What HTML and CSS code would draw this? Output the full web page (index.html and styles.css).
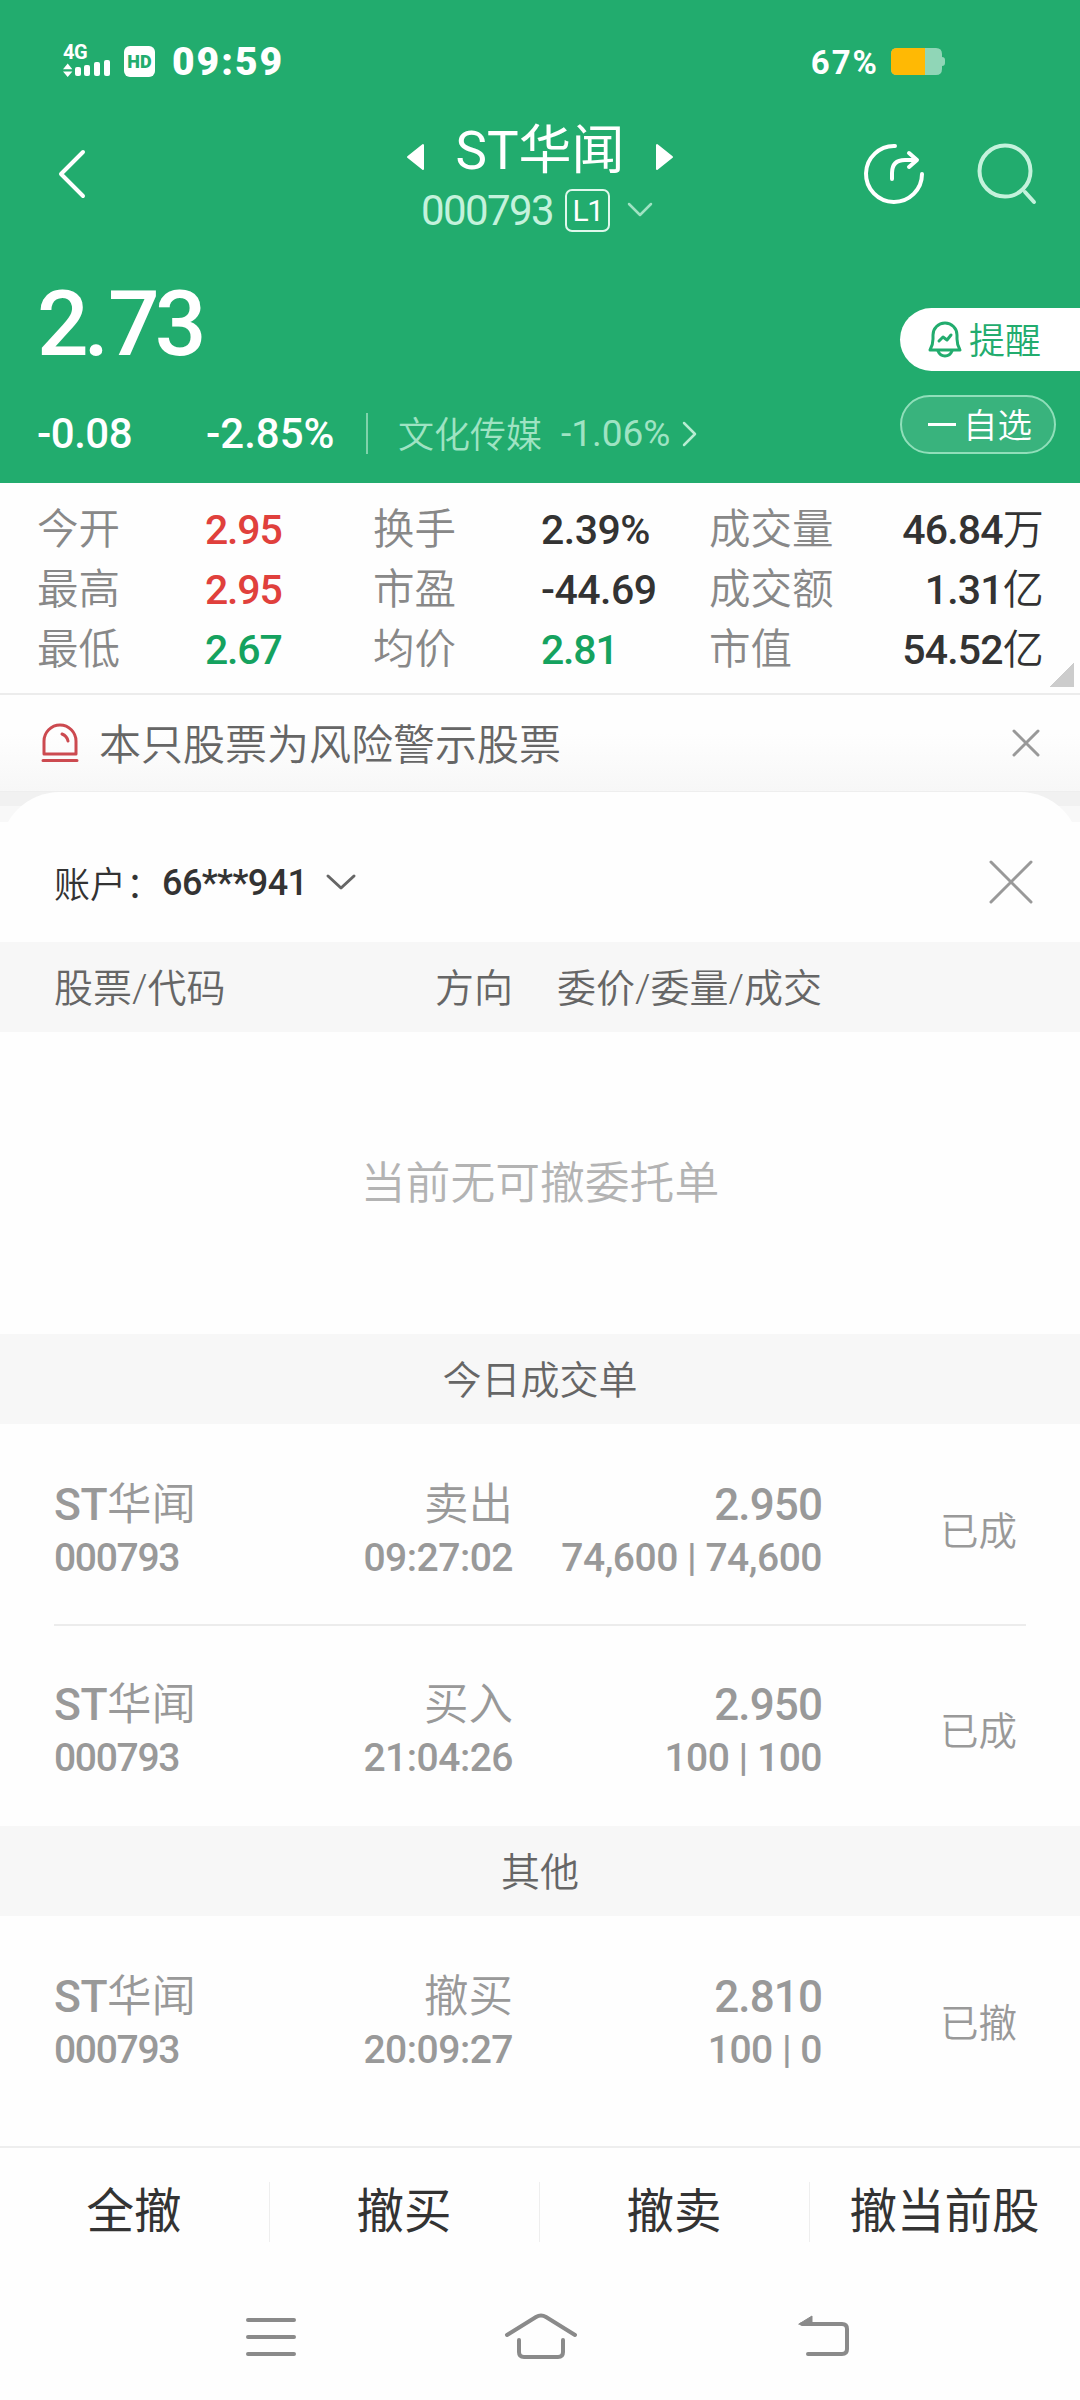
FILE: index.html
```html
<!DOCTYPE html>
<html lang="zh-CN">
  <head>
    <meta charset="utf-8">
    <title>ST华闻 000793</title>
    <link rel="stylesheet" href="styles.css">
  </head>
  <body>
    <header class="top">
      <div class="status">
        <div class="signal">
          <span class="net">4G</span>
          <svg width="48" height="16" viewBox="0 0 48 16" fill="#fff">
            <path d="M0 7.200L4.700 1.500l4.700 5.700zM0 9.500h9.400L4.700 15z" />
            <rect x="12" y="5" width="6" height="9" rx="2" />
            <rect x="21" y="3" width="6" height="11" rx="2" />
            <rect x="31" y="0" width="6" height="14" rx="2" />
            <rect x="41" y="-2" width="6" height="16" rx="2" />
          </svg>
        </div>
        <span class="hd">HD</span>
        <span class="time">09:59</span>
        <span class="percent">67%</span>
        <svg width="54" height="27" viewBox="0 0 54 27">
          <path d="M6 0h39q6 0 6 6v3q3 0 3 3v3q0 3-3 3v3q0 6-6 6H6q-6 0-6-6V6q0-6 6-6z" fill="#90d6b7" />
          <path d="M6 0h28v27H6q-6 0-6-6V6q0-6 6-6z" fill="#ffb904" />
        </svg>
      </div>
      <div class="nav">
        <svg class="back" width="30" height="52" viewBox="0 0 30 52">
          <path d="M27 4L5 26l22 22" />
        </svg>
        <div class="title">
          <div class="name">
            <svg width="18" height="28" viewBox="0 0 18 28"><path d="M1 14L16 2v24z" /></svg>
            <h1>ST华闻</h1>
            <svg width="18" height="28" viewBox="0 0 18 28"><path d="M17 14L2 2v24z" /></svg>
          </div>
          <div class="code">
            <span>000793</span>
            <span class="level">L1</span>
            <svg width="26" height="16" viewBox="0 0 26 16"><path d="M2 2l11 11L24 2" /></svg>
          </div>
        </div>
        <svg class="share" width="62" height="62" viewBox="0 0 62 62">
          <path d="M32 3A28 28 0 1 0 59 31" />
          <path d="M29 36v-6q0-13 13-13h11M46 10l8 7-8 7" />
        </svg>
        <svg class="search" width="60" height="62" viewBox="0 0 60 62">
          <circle cx="28" cy="28" r="25.500" />
          <path d="M48 49l9 10" />
        </svg>
      </div>
      <div class="quote">
        <div class="left">
          <div class="price">2<em>.</em>73</div>
          <div class="change">
            <span class="diff">-0.08</span>
            <span class="rate">-2.85%</span>
            <span class="sep"></span>
            <span class="sector">文化传媒</span>
            <span class="sector-rate">-1.06%</span>
            <svg width="16" height="26" viewBox="0 0 16 26"><path d="M2 2l11 11L2 24" /></svg>
          </div>
        </div>
        <div class="actions">
          <div class="remind">
            <svg width="34" height="38" viewBox="0 0 34 38">
              <path d="M5 18v-4a12 12 0 0 1 24 0v4q0 6 3 11H2q3-5 3-11z" />
              <path d="M10 30q2 5 7 5t7-5" />
              <path d="M11 20l4-4 4 3 4-5" />
            </svg>
            <span>提醒</span>
          </div>
          <div class="watch"><i></i><span>自选</span></div>
        </div>
      </div>
    </header>

    <section class="stats">
      <span class="label">今开</span><span class="red">2.95</span>
      <span class="label">换手</span><span>2.39%</span>
      <span class="label">成交量</span><span class="right">46.84<em>万</em></span>
      <span class="label">最高</span><span class="red">2.95</span>
      <span class="label">市盈</span><span>-44.69</span>
      <span class="label">成交额</span><span class="right">1.31<em>亿</em></span>
      <span class="label">最低</span><span class="green">2.67</span>
      <span class="label">均价</span><span class="green">2.81</span>
      <span class="label">市值</span><span class="right">54.52<em>亿</em></span>
      <i class="corner"></i>
    </section>

    <section class="notice">
      <svg width="36" height="40" viewBox="0 0 36 40">
        <path d="M2 31V18a16 16 0 0 1 32 0v13zM1 37.500h34M20 11q5 2 6 7" />
      </svg>
      <p>本只股票为风险警示股票</p>
      <svg class="close" width="28" height="28" viewBox="0 0 28 28"><path d="M2 2l24 24M26 2L2 26" /></svg>
    </section>

    <div class="backdrop">
      <main class="sheet">
        <div class="account">
          <span>账户：</span><span class="num">66***941</span>
          <svg width="30" height="18" viewBox="0 0 30 18"><path d="M2 3l13 12L28 3" /></svg>
          <svg class="close" width="44" height="44" viewBox="0 0 44 44"><path d="M2 2l40 40M42 2L2 42" /></svg>
        </div>
        <div class="row head">
          <span>股票/代码</span><span>方向</span><span>委价/委量/成交</span><span></span>
        </div>
        <div class="empty">当前无可撤委托单</div>
        <div class="section">今日成交单</div>
        <div class="row order">
          <div><b><em>ST</em>华闻</b><small class="id">000793</small></div>
          <div><b>卖出</b><small>09:27:02</small></div>
          <div><b class="cost">2.950</b><small>74,600 | 74,600</small></div>
          <span>已成</span>
        </div>
        <div class="line"></div>
        <div class="row order">
          <div><b><em>ST</em>华闻</b><small class="id">000793</small></div>
          <div><b>买入</b><small>21:04:26</small></div>
          <div><b class="cost">2.950</b><small>100 | 100</small></div>
          <span>已成</span>
        </div>
        <div class="section other">其他</div>
        <div class="row order">
          <div><b><em>ST</em>华闻</b><small class="id">000793</small></div>
          <div><b>撤买</b><small>20:09:27</small></div>
          <div><b class="cost">2.810</b><small>100 | 0</small></div>
          <span>已撤</span>
        </div>
      </main>
    </div>

    <footer>
      <div class="buttons">
        <button>全撤</button>
        <button>撤买</button>
        <button>撤卖</button>
        <button>撤当前股</button>
      </div>
      <div class="system">
        <svg width="50" height="44" viewBox="0 0 50 44"><path d="M2 5h46M2 22h46M2 39h46" /></svg>
        <svg class="home" width="72" height="48" viewBox="0 0 72 48">
          <path d="M2 22L31 4q5-3 10 0l29 18M14 27v12q0 5 5 5h34q5 0 5-5V27" />
        </svg>
        <svg width="52" height="44" viewBox="0 0 52 44">
          <path d="M4 9h40q5 0 5 5v20q0 5-5 5H10" />
          <path class="tip" d="M1 9L14 1v9z" />
        </svg>
      </div>
    </footer>
  </body>
</html>
```

FILE: styles.css
```css
* {
  box-sizing: border-box;
}

body {
  margin: 0;
  width: 1080px;
  height: 2400px;
  overflow: hidden;
  background: #fefefe;
  color: #333;
  font-family: Roboto, "Noto Sans CJK SC", sans-serif;
  font-weight: 400;
}

svg {
  display: block;
  flex: none;
  overflow: visible;
}

svg path,
svg circle {
  stroke-linecap: round;
  stroke-linejoin: round;
}

em {
  font-style: normal;
}

.top {
  height: 483px;
  background: #22ac6e;
  color: #fff;
}

/* status bar */
.status {
  display: flex;
  align-items: center;
  height: 122px;
  padding: 0 135px 0 63px;
}

.signal {
  width: 48px;
  padding-bottom: 2px;
}

.net {
  display: block;
  font-size: 20px;
  font-weight: 700;
  line-height: 20px;
  letter-spacing: -0.5px;
}

.hd {
  width: 31px;
  height: 31px;
  margin-left: 13px;
  border-radius: 6px;
  background: #fff;
  color: #22ac6e;
  font-size: 18px;
  font-weight: 900;
  line-height: 31px;
  text-align: center;
}

.time {
  margin-left: 17px;
  padding-top: 1px;
  font-size: 39px;
  font-weight: 900;
  letter-spacing: 2px;
}

.percent {
  margin-left: auto;
  margin-right: 12px;
  padding-top: 2px;
  font-size: 33px;
  font-weight: 700;
  letter-spacing: 2px;
}

/* title bar */
.nav {
  display: flex;
  height: 126px;
  padding-left: 56px;
}

.nav path,
.nav circle {
  fill: none;
  stroke: #fff;
  stroke-width: 4;
}

.back {
  margin-top: 26px;
}

.title {
  width: 266px;
  margin-left: 321px;
}

.name {
  display: flex;
  align-items: center;
  justify-content: space-between;
  height: 58px;
}

.name svg {
  margin-top: 12px;
}

.nav .name path {
  fill: #fff;
  stroke-width: 2;
}

h1 {
  margin: 0;
  font-size: 53px;
  font-weight: 400;
  line-height: 58px;
  white-space: nowrap;
}

.code {
  display: flex;
  align-items: center;
  height: 60px;
  padding-left: 14px;
  color: #c4f2dc;
  font-size: 42px;
  letter-spacing: -1.6px;
}

.level {
  flex: none;
  width: 45px;
  height: 43px;
  margin: 0 17px 0 12px;
  border: 2px solid #dff8ec;
  border-radius: 7px;
  color: #fff;
  font-size: 30px;
  line-height: 39px;
  text-align: center;
}

.nav .code path {
  stroke: #9fe3c3;
  stroke-width: 2.5;
}

.share {
  margin: 21px 0 0 190px;
}

.search {
  margin: 21px 0 0 52px;
}

.nav .search path,
.nav .search circle {
  stroke: #c4f2dc;
}

/* price block */
.quote {
  display: flex;
  justify-content: space-between;
}

.price {
  height: 148px;
  padding-left: 37px;
  font-size: 91px;
  font-weight: 500;
  line-height: 152px;
  letter-spacing: -5px;
}

.price em {
  letter-spacing: -1px;
}

.change {
  display: flex;
  align-items: center;
  height: 74px;
  padding: 1px 0 0 37px;
  font-size: 42px;
  font-weight: 500;
}

.diff {
  width: 169px;
  letter-spacing: -0.5px;
}

.rate {
  width: 160px;
}

.sep {
  width: 2px;
  height: 41px;
  background: #7fd3ab;
}

.sector {
  width: 163px;
  margin-left: 30px;
  padding-bottom: 4px;
  font-size: 36px;
  font-weight: 350;
}

.sector,
.sector-rate {
  color: #9fe3c3;
}

.sector-rate {
  width: 121px;
  font-size: 37px;
  font-weight: 400;
}

.change path {
  fill: none;
  stroke: #b7ecd2;
  stroke-width: 2.5;
}

.actions {
  width: 180px;
  padding-top: 60px;
  font-size: 36px;
  font-weight: 350;
}

.actions span {
  padding-bottom: 4px;
}

.remind {
  display: flex;
  align-items: center;
  height: 63px;
  padding-left: 28px;
  border-radius: 32px 0 0 32px;
  background: #fff;
  color: #22ac6e;
}

.remind svg {
  margin-right: 7px;
}

.remind path {
  fill: none;
  stroke: #22ac6e;
  stroke-width: 3;
}

.watch {
  display: flex;
  align-items: center;
  width: 156px;
  height: 59px;
  margin-top: 24px;
  padding-left: 26px;
  border: 2px solid #90dfba;
  border-radius: 30px;
  background: #39b37d;
  font-size: 34.5px;
}

.watch i {
  width: 28px;
  height: 3px;
  margin-right: 7px;
  background: #fff;
}

/* key figures */
.stats {
  position: relative;
  display: grid;
  grid-template-columns: 168px 168px 168px 168px 169px 165px;
  grid-auto-rows: 60px;
  height: 212px;
  padding: 17px 37px 0;
  border-bottom: 2px solid #ececec;
  font-size: 41px;
  font-weight: 500;
  line-height: 60px;
  white-space: nowrap;
}

.stats span {
  letter-spacing: -0.5px;
}

.stats em {
  font-weight: 350;
}

.stats .label {
  color: #888;
  font-size: 41.5px;
  font-weight: 350;
  letter-spacing: 0;
}

.stats .red {
  color: #e0403c;
  letter-spacing: -1.2px;
}

.stats .green {
  color: #15a25f;
  letter-spacing: -1.2px;
}

.stats .right {
  justify-self: end;
  letter-spacing: -0.8px;
}

.corner {
  position: absolute;
  right: 6px;
  bottom: 6px;
  width: 24px;
  height: 24px;
  background: linear-gradient(135deg, transparent 50%, #ccc 50%);
}

/* risk notice */
.notice {
  display: flex;
  align-items: center;
  height: 97px;
  padding: 0 40px 0 42px;
  border-bottom: 1px solid #eee;
  background: linear-gradient(#fefefe 40%, #f7f7f7);
}

.notice p {
  margin: 0 0 4px 21px;
  color: #666;
  font-size: 42px;
  font-weight: 350;
}

.notice path {
  fill: none;
  stroke: #cc4a50;
  stroke-width: 3;
}

.close {
  margin-left: auto;
}

.notice .close path,
.account .close path {
  stroke: #999;
}

/* cancel order sheet */
.backdrop {
  height: 1354px;
  background: linear-gradient(#f1f1f1 14px, #f8f8f8 14px, #f8f8f8 30px, #fefefe 30px);
}

.sheet {
  height: 1354px;
  border-radius: 60px 60px 0 0;
  background: #fefefe;
}

.account {
  display: flex;
  align-items: center;
  height: 150px;
  padding: 29px 47px 0 54px;
  font-size: 36px;
}

.account > :first-child {
  font-weight: 350;
}

.num {
  padding-top: 3px;
  font-weight: 500;
  letter-spacing: -0.6px;
}

.account path {
  fill: none;
  stroke: #666;
  stroke-width: 3;
}

.account svg:not(.close) {
  margin-left: 19px;
}

.row {
  display: grid;
  grid-template-columns: 229px 230px 309px 195px;
  padding-left: 54px;
  text-align: right;
}

.row > :first-child {
  text-align: left;
}

.head,
.section {
  height: 90px;
  background: #f7f7f7;
  color: #666;
  font-size: 39px;
  font-weight: 350;
  line-height: 94px;
}

.section {
  text-align: center;
}

.empty {
  height: 302px;
  color: #b3b3b3;
  font-size: 44.8px;
  font-weight: 350;
  line-height: 303px;
  text-align: center;
}

.order {
  height: 200px;
  color: #999;
}

.order div {
  padding-top: 54px;
}

.order b,
.order small {
  display: block;
  white-space: nowrap;
}

.order b {
  height: 53px;
  font-size: 44.5px;
  font-weight: 350;
  line-height: 54px;
}

.order em {
  font-weight: 500;
  letter-spacing: -0.5px;
}

.order .cost {
  font-size: 44px;
  font-weight: 500;
  letter-spacing: -0.9px;
}

.order small {
  font-size: 39px;
  font-weight: 500;
  line-height: 54px;
  letter-spacing: -0.5px;
}

.order .id {
  letter-spacing: -1.3px;
}

.order > span {
  font-size: 38.5px;
  font-weight: 350;
  line-height: 215px;
}

.line {
  height: 2px;
  margin: 0 54px -2px;
  background: #ececec;
}

.other {
  margin-top: 2px;
}

/* bottom buttons */
.buttons {
  display: flex;
  align-items: center;
  height: 130px;
  border-top: 2px solid #eee;
}

button {
  width: 270px;
  height: 60px;
  padding: 0 1px 0 0;
  border: 0;
  border-right: 1px solid #eee;
  background: none;
  color: #333;
  font: 400 47.5px/60px Roboto, "Noto Sans CJK SC", sans-serif;
}

button:last-child {
  border-right: 0;
}

.system {
  display: flex;
  align-items: center;
  height: 122px;
  padding-left: 246px;
}

.home {
  margin: 0 221px 0 209px;
}

.system path {
  fill: none;
  stroke: #8a8a8a;
  stroke-width: 4;
}

.system .tip {
  fill: #8a8a8a;
  stroke-width: 1;
}
```
